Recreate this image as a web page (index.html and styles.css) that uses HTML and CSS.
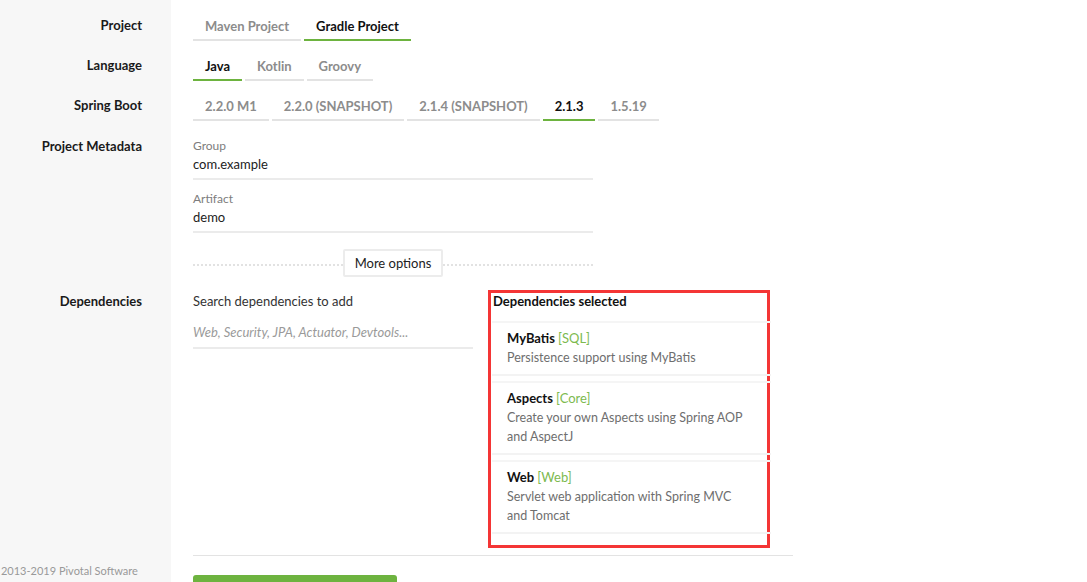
FILE: index.html
```html
<!DOCTYPE html>
<html lang="en">
<head>
<meta charset="utf-8">
<title>Spring Initializr</title>
<link rel="stylesheet" href="styles.css">
</head>
<body>
<main class="form">
  <div class="row row-first">
    <div class="label">Project</div>
    <div class="tabs">
      <span class="tab">Maven Project</span>
      <span class="tab active">Gradle Project</span>
    </div>
  </div>
  <div class="row">
    <div class="label">Language</div>
    <div class="tabs">
      <span class="tab active">Java</span>
      <span class="tab">Kotlin</span>
      <span class="tab">Groovy</span>
    </div>
  </div>
  <div class="row">
    <div class="label">Spring Boot</div>
    <div class="tabs">
      <span class="tab">2.2.0 M1</span>
      <span class="tab">2.2.0 (SNAPSHOT)</span>
      <span class="tab">2.1.4 (SNAPSHOT)</span>
      <span class="tab active">2.1.3</span>
      <span class="tab">1.5.19</span>
    </div>
  </div>
  <div class="row row-meta">
    <div class="label label-meta">Project Metadata</div>
    <div class="meta">
      <div class="field">
        <div class="field-label">Group</div>
        <div class="field-value">com.example</div>
      </div>
      <div class="field field-next">
        <div class="field-label">Artifact</div>
        <div class="field-value">demo</div>
      </div>
      <div class="more">
        <span class="dots"></span>
        <span class="more-btn">More options</span>
        <span class="dots"></span>
      </div>
    </div>
  </div>
  <div class="row row-deps">
    <div class="label label-deps">Dependencies</div>
    <div class="deps">
      <div class="search">
        <div class="search-title">Search dependencies to add</div>
        <div class="search-input">Web, Security, JPA, Actuator, Devtools...</div>
      </div>
      <div class="selected">
        <div class="selected-title">Dependencies selected</div>
        <div class="card">
          <div class="card-title">MyBatis <span class="tag">[SQL]</span></div>
          <div class="card-desc">Persistence support using MyBatis</div>
        </div>
        <div class="card">
          <div class="card-title">Aspects <span class="tag">[Core]</span></div>
          <div class="card-desc">Create your own Aspects using Spring AOP and AspectJ</div>
        </div>
        <div class="card">
          <div class="card-title">Web <span class="tag">[Web]</span></div>
          <div class="card-desc">Servlet web application with Spring MVC and Tomcat</div>
        </div>
      </div>
    </div>
  </div>
  <div class="row row-foot">
    <div class="footer">© 2013-2019 Pivotal Software</div>
    <div class="actions">
      <div class="rule"></div>
      <div class="generate"></div>
    </div>
  </div>
</main>
</body>
</html>
```
FILE: styles.css
```css
html, body {
  margin: 0;
  padding: 0;
  height: 100%;
  overflow: hidden;
}
body {
  font-family: Lato, "Liberation Sans", sans-serif;
  color: #222;
  font-size: 13px;
  background: linear-gradient(to right, #f7f7f7 171px, #ffffff 171px);
}
.form {
  padding-top: 10px;
}
.row {
  display: grid;
  grid-template-columns: 171px 1fr;
  padding-bottom: 9px;
}
.label {
  text-align: right;
  padding-right: 29px;
  font-weight: bold;
  font-size: 13px;
  line-height: 20px;
  padding-top: 5px;
  color: #1a1a1a;
}
.tabs {
  display: flex;
  gap: 3px;
  padding-left: 22px;
}
.tab {
  font-weight: bold;
  font-size: 13px;
  line-height: 20px;
  padding: 6px 12px 3px;
  color: #8c8c8c;
  border-bottom: 2px solid #e3e3e3;
}
.tab.active {
  color: #111;
  border-bottom-color: #6db33f;
}

.row-meta {
  padding-bottom: 13px;
}
.label-meta {
  padding-top: 6px;
}
.meta {
  padding-left: 22px;
  padding-top: 7px;
  width: 400px;
}
.field {
  border-bottom: 2px solid #ebebeb;
  padding-bottom: 5px;
}
.field-next {
  margin-top: 10px;
}
.field-label {
  font-size: 12px;
  line-height: 18px;
  color: #7d7d7d;
}
.field-value {
  font-size: 13px;
  line-height: 18px;
  color: #222;
}
.more {
  display: flex;
  align-items: center;
  margin-top: 16px;
}
.dots {
  flex: 1;
  border-top: 2px dotted #e2e2e2;
  margin-top: 4px;
}
.more-btn {
  border: 2px solid #ececec;
  border-radius: 2px;
  padding: 2px 10px;
  line-height: 20px;
  font-size: 13px;
  color: #222;
}

.row-deps {
  padding-bottom: 0;
}
.label-deps {
  padding-top: 1px;
}
.deps {
  display: flex;
  gap: 15px;
  padding-left: 22px;
}
.search {
  width: 280px;
}
.search-title {
  padding-top: 1px;
  line-height: 20px;
  color: #333;
}
.search-input {
  margin-top: 10px;
  padding: 1px 0 5px;
  line-height: 20px;
  font-style: italic;
  color: #9a9a9a;
  border-bottom: 2px solid #ebebeb;
}
.selected {
  width: 275px;
  border: 3px solid #f43535;
  padding: 0 0 11px 1px;
}
.selected-title {
  font-weight: bold;
  font-size: 13px;
  line-height: 16px;
  padding-left: 1px;
  margin-bottom: 12px;
  color: #111;
}
.card {
  border-top: 2px solid #f5f5f5;
  border-bottom: 2px solid #f3f3f3;
  padding: 6px 20px 7px 15px;
  margin-right: -4px;
  margin-bottom: 5px;
}
.card:last-child {
  margin-bottom: 0;
}
.card-title {
  font-weight: bold;
  line-height: 19px;
  color: #111;
}
.tag {
  font-weight: normal;
  color: #7dba4f;
}
.card-desc {
  line-height: 19px;
  color: #6e6e6e;
  font-size: 12.5px;
}

.row-foot {
  padding-top: 7px;
}
.footer {
  font-size: 11px;
  line-height: 16px;
  color: #999;
  padding-top: 8px;
  margin-left: -11px;
  white-space: nowrap;
}
.actions {
  padding-left: 22px;
}
.rule {
  width: 600px;
  border-top: 1px solid #e3e3e3;
}
.generate {
  margin-top: 19px;
  width: 204px;
  height: 40px;
  background: #6db33f;
  border-radius: 3px 3px 0 0;
}
```
